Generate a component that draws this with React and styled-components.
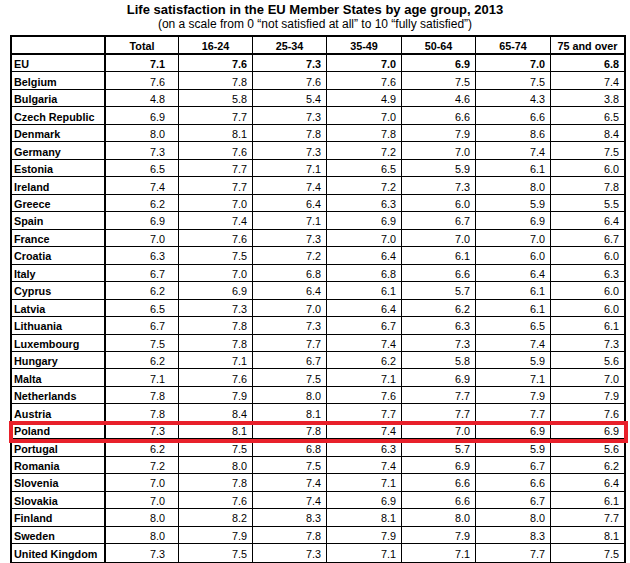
import React from 'react';
import styled, { createGlobalStyle } from 'styled-components';

const GlobalStyle = createGlobalStyle`
  html, body {
    margin: 0;
    padding: 0;
    background: #fff;
  }
  body {
    font-family: "Liberation Sans", Arial, sans-serif;
    color: #000;
  }
`;

const Page = styled.div`
  width: 630px;
  padding-top: 3px;
`;

const Title = styled.h1`
  margin: 0;
  font-size: 13px;
  line-height: 14px;
  font-weight: bold;
  text-align: center;
`;

const Subtitle = styled.p`
  margin: 0 0 4px;
  font-size: 12px;
  line-height: 14px;
  text-align: center;
`;

const TableFrame = styled.div`
  position: relative;
  margin-left: 10px;
  width: 616px;
  border: 2px solid #000;
  box-sizing: border-box;
`;

const Table = styled.table`
  width: 612px;
  table-layout: fixed;
  border-collapse: separate;
  border-spacing: 0;
  font-size: 10.8px;

  td:last-child, th:last-child {
    border-right: none;
  }
  tbody tr:last-child td {
    border-bottom: none;
  }
`;

const Row = styled.tr`
  height: ${(p) => (p.$head ? '18px' : '17.48px')};
`;

const HeadCell = styled.th`
  box-sizing: border-box;
  padding: 1px 0 0;
  font-weight: bold;
  text-align: center;
  vertical-align: middle;
  line-height: 12px;
  border-bottom: 2px solid #000;
  border-right: ${(p) => (p.$first ? '2px' : '1px')} solid #000;
`;

const NameCell = styled.td`
  padding: 2px 0 0 2px;
  font-weight: bold;
  text-align: left;
  vertical-align: middle;
  line-height: 12px;
  white-space: nowrap;
  border-bottom: 1px solid #000;
  border-right: 2px solid #000;
`;

const ValueCell = styled.td`
  padding: 2px ${(p) => (p.$total ? '13px' : '5px')} 0 0;
  font-weight: ${(p) => (p.$bold ? 'bold' : 'normal')};
  text-align: right;
  vertical-align: middle;
  line-height: 12px;
  border-bottom: 1px solid #000;
  border-right: 1px solid #000;
`;

const Highlight = styled.div`
  position: absolute;
  left: -3px;
  top: 384px;
  width: 619px;
  height: 22px;
  border: 4px solid #e8202a;
  box-sizing: border-box;
  pointer-events: none;
`;

const columns = [
  { label: '', width: 94 },
  { label: 'Total', width: 73 },
  { label: '16-24', width: 74 },
  { label: '25-34', width: 74 },
  { label: '35-49', width: 75 },
  { label: '50-64', width: 74 },
  { label: '65-74', width: 75 },
  { label: '75 and over', width: 73 },
];

const rows = [
  ['EU', '7.1', '7.6', '7.3', '7.0', '6.9', '7.0', '6.8'],
  ['Belgium', '7.6', '7.8', '7.6', '7.6', '7.5', '7.5', '7.4'],
  ['Bulgaria', '4.8', '5.8', '5.4', '4.9', '4.6', '4.3', '3.8'],
  ['Czech Republic', '6.9', '7.7', '7.3', '7.0', '6.6', '6.6', '6.5'],
  ['Denmark', '8.0', '8.1', '7.8', '7.8', '7.9', '8.6', '8.4'],
  ['Germany', '7.3', '7.6', '7.3', '7.2', '7.0', '7.4', '7.5'],
  ['Estonia', '6.5', '7.7', '7.1', '6.5', '5.9', '6.1', '6.0'],
  ['Ireland', '7.4', '7.7', '7.4', '7.2', '7.3', '8.0', '7.8'],
  ['Greece', '6.2', '7.0', '6.4', '6.3', '6.0', '5.9', '5.5'],
  ['Spain', '6.9', '7.4', '7.1', '6.9', '6.7', '6.9', '6.4'],
  ['France', '7.0', '7.6', '7.3', '7.0', '7.0', '7.0', '6.7'],
  ['Croatia', '6.3', '7.5', '7.2', '6.4', '6.1', '6.0', '6.0'],
  ['Italy', '6.7', '7.0', '6.8', '6.8', '6.6', '6.4', '6.3'],
  ['Cyprus', '6.2', '6.9', '6.4', '6.1', '5.7', '6.1', '6.0'],
  ['Latvia', '6.5', '7.3', '7.0', '6.4', '6.2', '6.1', '6.0'],
  ['Lithuania', '6.7', '7.8', '7.3', '6.7', '6.3', '6.5', '6.1'],
  ['Luxembourg', '7.5', '7.8', '7.7', '7.4', '7.3', '7.4', '7.3'],
  ['Hungary', '6.2', '7.1', '6.7', '6.2', '5.8', '5.9', '5.6'],
  ['Malta', '7.1', '7.6', '7.5', '7.1', '6.9', '7.1', '7.0'],
  ['Netherlands', '7.8', '7.9', '8.0', '7.6', '7.7', '7.9', '7.9'],
  ['Austria', '7.8', '8.4', '8.1', '7.7', '7.7', '7.7', '7.6'],
  ['Poland', '7.3', '8.1', '7.8', '7.4', '7.0', '6.9', '6.9'],
  ['Portugal', '6.2', '7.5', '6.8', '6.3', '5.7', '5.9', '5.6'],
  ['Romania', '7.2', '8.0', '7.5', '7.4', '6.9', '6.7', '6.2'],
  ['Slovenia', '7.0', '7.8', '7.4', '7.1', '6.6', '6.6', '6.4'],
  ['Slovakia', '7.0', '7.6', '7.4', '6.9', '6.6', '6.7', '6.1'],
  ['Finland', '8.0', '8.2', '8.3', '8.1', '8.0', '8.0', '7.7'],
  ['Sweden', '8.0', '7.9', '7.8', '7.9', '7.9', '8.3', '8.1'],
  ['United Kingdom', '7.3', '7.5', '7.3', '7.1', '7.1', '7.7', '7.5'],
];

const App = () => (
  <Page>
    <GlobalStyle />
    <Title>Life satisfaction in the EU Member States by age group, 2013</Title>
    <Subtitle>(on a scale from 0 “not satisfied at all” to 10 “fully satisfied”)</Subtitle>
    <TableFrame>
      <Table>
        <thead>
          <Row $head>
            {columns.map((col, i) => (
              <HeadCell key={i} $first={i === 0} style={{ width: col.width }}>
                {col.label}
              </HeadCell>
            ))}
          </Row>
        </thead>
        <tbody>
          {rows.map(([name, ...values]) => (
            <Row key={name}>
              <NameCell>{name}</NameCell>
              {values.map((v, i) => (
                <ValueCell key={i} $total={i === 0} $bold={name === 'EU'}>
                  {v}
                </ValueCell>
              ))}
            </Row>
          ))}
        </tbody>
      </Table>
      <Highlight />
    </TableFrame>
  </Page>
);

export default App;
